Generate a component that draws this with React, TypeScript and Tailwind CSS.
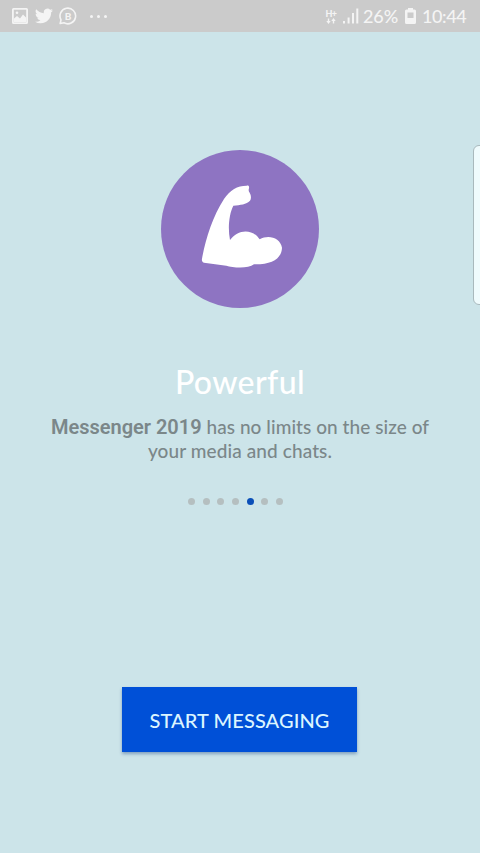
const SLIDES = 7
const ACTIVE_SLIDE = 4

function StatusBar() {
  return (
    <header className="flex h-8 items-center justify-between bg-[#cbcbcb] pr-[14px] pl-3 text-[#f4f4f4]">
      <div className="flex items-center">
        <svg className="h-4 w-4" viewBox="0 0 16 16" fill="none">
          <rect x="0.9" y="0.9" width="14.2" height="14.2" rx="0.6" stroke="currentColor" strokeWidth="1.8" />
          <path d="M2 14V10.5L5 8L8 10.5L11 6.5L14 9.5V14Z" fill="currentColor" />
          <circle cx="5" cy="4.8" r="1.3" fill="currentColor" />
        </svg>
        <svg className="ml-[7px] h-[18px] w-[18px]" viewBox="0 0 24 24" fill="currentColor">
          <path d="M23.95 4.57a10 10 0 0 1-2.82.78 4.96 4.96 0 0 0 2.16-2.73c-.95.56-2 .96-3.13 1.18a4.92 4.92 0 0 0-8.38 4.49C7.69 8.1 4.07 6.13 1.64 3.16a4.92 4.92 0 0 0 1.52 6.57 4.9 4.9 0 0 1-2.23-.61v.06a4.92 4.92 0 0 0 3.95 4.83 5 5 0 0 1-2.21.08 4.94 4.94 0 0 0 4.6 3.42A9.87 9.87 0 0 1 0 19.54a13.99 13.99 0 0 0 7.56 2.21c9.05 0 14-7.5 14-13.98 0-.21 0-.42-.02-.63a9.94 9.94 0 0 0 2.41-2.57z" />
        </svg>
        <span className="relative ml-[6px] flex h-[18px] w-[18px] items-center justify-center">
          <svg className="absolute inset-0 h-full w-full" viewBox="0 0 18 18" fill="none" stroke="currentColor" strokeWidth="1.6">
            <path d="M1.2 16.5L2 12.8A7.8 7.8 0 1 1 5 15.8Z" strokeLinejoin="round" />
          </svg>
          <span className="text-[10px] leading-none font-black">B</span>
        </span>
        <div className="ml-[13px] flex gap-[4px]">
          <span className="h-[3px] w-[3px] rounded-full bg-current" />
          <span className="h-[3px] w-[3px] rounded-full bg-current" />
          <span className="h-[3px] w-[3px] rounded-full bg-current" />
        </div>
      </div>

      <div className="flex items-center">
        <div className="flex w-[12px] flex-col items-center">
          <span className="text-[9px] leading-[9px] font-black tracking-[-0.5px]">H+</span>
          <svg className="h-[6px] w-[10px]" viewBox="0 0 10 6" fill="currentColor">
            <path d="M2.5 6L0.3 3H1.8V0.5H3.2V3H4.7ZM7.5 0L5.3 3H6.8V5.5H8.2V3H9.7Z" />
          </svg>
        </div>
        <svg className="ml-[6px] h-4 w-4" viewBox="0 0 16 16" fill="currentColor">
          <rect x="0" y="13" width="2" height="2.5" />
          <rect x="4.6" y="9.5" width="2" height="6" />
          <rect x="9" y="5" width="2" height="10.5" />
          <rect x="13.3" y="0.5" width="2" height="15" />
        </svg>
        <span className="ml-[4px] w-[37px] text-[18px] leading-none font-medium tracking-[-0.1px] whitespace-nowrap">26%</span>
        <svg className="ml-[5px] h-4 w-[11px]" viewBox="0 0 11 16" fill="currentColor">
          <path fillRule="evenodd" d="M3 0H8V1.5H9.5Q11 1.5 11 3V14.5Q11 16 9.5 16H1.5Q0 16 0 14.5V3Q0 1.5 1.5 1.5H3ZM2.5 4.5V10H8.5V4.5Z" />
        </svg>
        <span className="ml-[6px] w-[44px] text-[18px] leading-none font-medium tracking-[-0.4px] whitespace-nowrap">10:44</span>
      </div>
    </header>
  )
}

function ArmBadge() {
  return (
    <svg className="h-[158px] w-[158px]" viewBox="33 30 474 474">
      <circle cx="270" cy="267" r="237" fill="#8e74c2" />
      <path
        fill="#fff"
        d="M290 137C296 136 298 139 297 145C295 151 296 155 299 158C304 166 304 176 300 182C289 193 271 195 250 197C237 222 233 266 240 300C262 268 307 264 329 298C356 282 391 294 396 323C395 355 367 374 312 373C294 387 248 383 229 377L162 368C156 366 155 361 156 356C166 300 188 229 222 177C240 150 262 137 290 137Z"
      />
    </svg>
  )
}

export default function App() {
  return (
    <div className="relative flex h-[853px] w-[480px] flex-col overflow-hidden bg-[#cce4e9] font-['Lato',sans-serif]">
      <StatusBar />

      <main className="flex flex-1 flex-col items-center">
        <div className="mt-[118px]">
          <ArmBadge />
        </div>

        <h1 className="mt-[54px] text-[32px] leading-10 font-medium tracking-[0.4px] text-white">Powerful</h1>

        <p className="mt-[13px] text-center text-[19px] leading-6 font-medium whitespace-nowrap text-[#7b8789]">
          <strong className="font-['Roboto',sans-serif] text-[20px] font-semibold">Messenger 2019</strong>
          <span className="tracking-[0.06px]"> has no limits on the size of</span>
          <br />
          <span className="tracking-[0.1px]">your media and chats.</span>
        </p>

        <div className="mt-[35px] mr-[9px] flex gap-[7.7px]">
          {Array.from({ length: SLIDES }, (_, i) => (
            <span
              key={i}
              className={`h-[7px] w-[7px] rounded-full ${i === ACTIVE_SLIDE ? 'bg-[#0a4fb8]' : 'bg-[#b5bfc0]'}`}
            />
          ))}
        </div>

        <button className="mt-[182px] mr-px h-[65px] w-[235px] bg-[#0050d7] text-[20px] font-medium tracking-[0.1px] whitespace-nowrap text-[#dcf5ff] shadow-[0_2px_3px_rgba(40,80,140,0.45)]">
          START MESSAGING
        </button>
      </main>

      {/* edge panel handle */}
      <div className="absolute top-[145px] -right-[6px] h-[160px] w-[13px] rounded-[6px] border border-[#a9b9bd] bg-[#effbfd]" />
    </div>
  )
}
